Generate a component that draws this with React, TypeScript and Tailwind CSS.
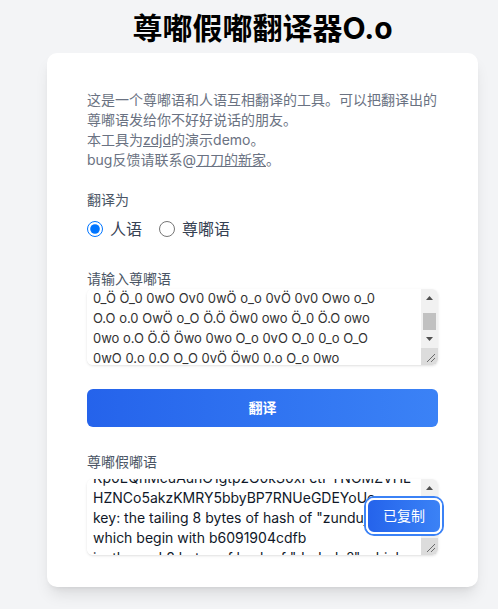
import { useEffect, useRef } from "react";

const inputText = [
  "Ö_O 0v0 o.Ö Öwo 0_0 O.o 0wO Ö.0 Owo O_Ö",
  "o_0 0wÖ O.O Öv0 0.Ö owo O_o 0_O Öw0 o.o",
  "0_Ö Ö_0 0wO Ov0 0wÖ o_o 0vÖ 0v0 Owo o_0",
  "O.O o.0 OwÖ o_O Ö.Ö Öw0 owo Ö_0 Ö.O owo",
  "0wo o.O Ö.Ö Öwo 0wo O_o 0vO O_0 0_o O_O",
  "0wO 0.o 0.O O_O 0vÖ Öw0 0.o O_o 0wo",
  "Ö.0 o_O 0w0 Öv0 O.o",
].join("\n");

const outputText = [
  "U2FsdGVkX19m3vQeYt8bLr0aPz6sNc1W",
  "Kp0EQhMcuAuhO1gtp2G0kS0xFetPYNOMZVHL",
  "HZNCo5akzKMRY5bbyBP7RNUeGDEYoUc",
  'key: the tailing 8 bytes of hash of "zundujiadu?"',
  "which begin with b6091904cdfb",
  'iv: the end 8 bytes of hash of "dududu?" which',
  "begin with 7e41a0c93d25",
].join("\n");

// the headless browser hides scrollbars, so the classic one is drawn over the textarea
function Scrollbar({ thumb }: { thumb: string }) {
  return (
    <div className="pointer-events-none absolute top-0 right-0 flex h-full w-[17px] flex-col">
      <div className="flex flex-1 flex-col bg-[#f1f1f1]">
        <div className="flex h-[14px] items-end justify-center pb-[3px]">
          <svg width="7" height="4" viewBox="0 0 7 4">
            <polygon points="3.5,0 7,4 0,4" fill="#505050" />
          </svg>
        </div>
        <div className="relative flex-1">
          <div className={`absolute left-[2px] right-[2px] bg-[#c1c1c1] ${thumb}`} />
        </div>
        <div className="flex h-[14px] items-start justify-center pt-[3px]">
          <svg width="7" height="4" viewBox="0 0 7 4">
            <polygon points="0,0 7,0 3.5,4" fill="#505050" />
          </svg>
        </div>
      </div>
      <div className="flex h-[17px] items-end justify-end bg-[#dcdcdc] p-[3px]">
        <svg width="9" height="9" viewBox="0 0 9 9">
          <line x1="9" y1="1" x2="1" y2="9" stroke="#6b6b6b" strokeWidth="1" />
          <line x1="9" y1="5" x2="5" y2="9" stroke="#6b6b6b" strokeWidth="1" />
        </svg>
      </div>
    </div>
  );
}

export default function App() {
  const inputRef = useRef<HTMLTextAreaElement>(null);
  const outputRef = useRef<HTMLTextAreaElement>(null);

  useEffect(() => {
    if (inputRef.current) inputRef.current.scrollTop = 45;
    if (outputRef.current) outputRef.current.scrollTop = 35;
  }, []);

  return (
    <div className="min-h-screen bg-[#f3f4f6] pl-[27px] pt-[10px] pb-[22px] font-['Inter','Noto_Sans_CJK_SC',sans-serif]">
      <h1 className="text-center text-[30px] font-bold leading-9 text-black">尊嘟假嘟翻译器O.o</h1>

      <div className="mx-auto mt-[7px] w-[431px] rounded-[10px] bg-white px-10 pt-[37px] pb-8 shadow-lg">
        <p className="text-sm leading-5 text-gray-500">
          这是一个尊嘟语和人语互相翻译的工具。可以把翻译出的尊嘟语发给你不好好说话的朋友。
          <br />
          本工具为<span className="underline">zdjd</span>的演示demo。
          <br />
          bug反馈请联系@<span className="underline">刀刀的新家</span>。
        </p>

        <div className="mt-5 text-sm leading-5 text-gray-600">翻译为</div>
        <div className="mt-[7px] flex h-6 items-center text-base text-gray-700">
          <label className="flex items-center gap-[7px]">
            <input type="radio" name="target" defaultChecked className="h-4 w-4" />
            人语
          </label>
          <label className="ml-[17px] flex items-center gap-[7px]">
            <input type="radio" name="target" className="h-4 w-4" />
            尊嘟语
          </label>
        </div>

        <div className="mt-[28px] text-sm leading-5 text-gray-600">请输入尊嘟语</div>
        <div className="relative overflow-hidden rounded-md shadow-sm">
          <textarea
            ref={inputRef}
            readOnly
            value={inputText}
            className="block h-[76px] w-full resize-none overflow-hidden bg-white py-1 pr-[23px] pl-1.5 text-[13px] leading-5 text-[#333] outline-none"
          />
          <Scrollbar thumb="top-[10px] h-[17px]" />
        </div>

        <button className="mt-6 flex h-[38px] w-full items-center justify-center rounded-md bg-linear-to-r from-[#2563eb] to-[#3b82f6] text-sm font-semibold text-white">
          翻译
        </button>

        <div className="mt-[25px] text-sm leading-5 text-gray-600">尊嘟假嘟语</div>
        <div className="relative mt-[7px]">
          <div className="relative overflow-hidden rounded-md shadow-sm">
            <textarea
              ref={outputRef}
              readOnly
              value={outputText}
              className="block h-[76px] w-full resize-none overflow-hidden bg-white py-1 pr-[23px] pl-1.5 text-sm leading-5 text-gray-900 outline-none"
            />
            <Scrollbar thumb="top-[8px] h-[14px]" />
          </div>
          <button className="absolute top-[19px] right-[-4px] flex h-9 w-[76px] items-center justify-center rounded-lg border-2 border-white bg-linear-to-r from-[#2563eb] to-[#3b82f6] text-sm text-white ring-2 ring-[#3b82f6]">
            已复制
          </button>
        </div>
      </div>
    </div>
  );
}
